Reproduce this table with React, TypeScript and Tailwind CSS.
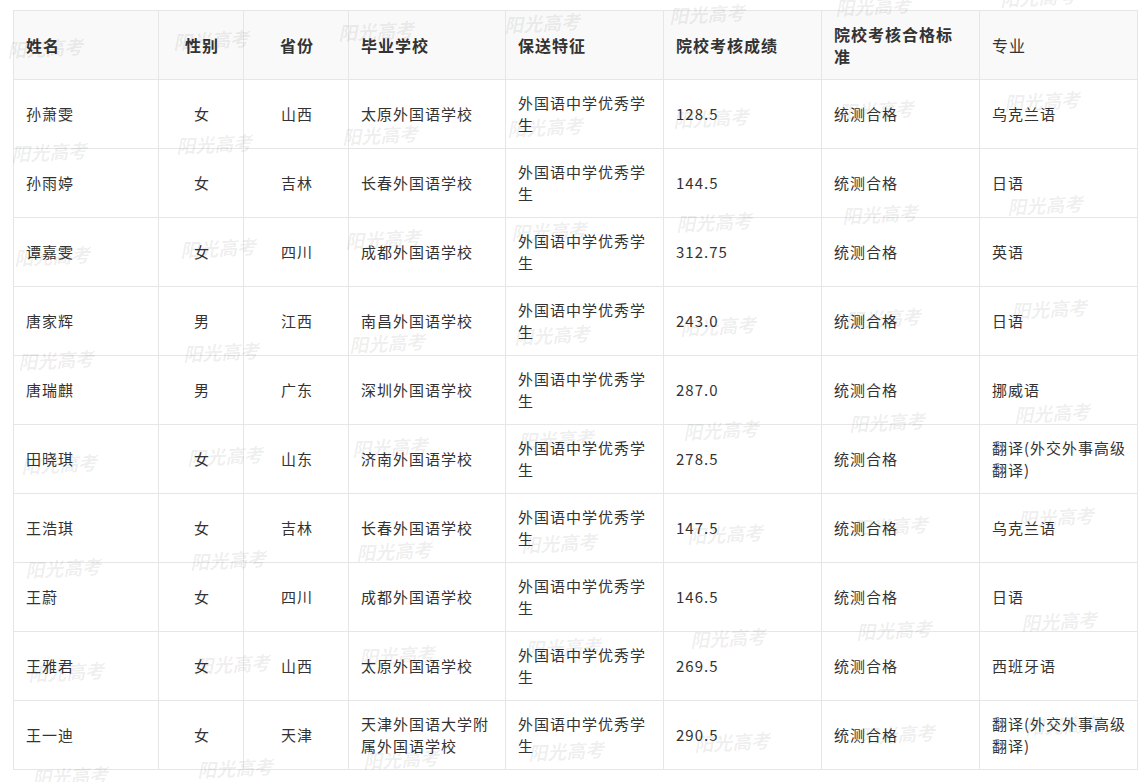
import React from "react";

const rows: string[][] = [
  ["孙萧雯", "女", "山西", "太原外国语学校", "外国语中学优秀学生", "128.5", "统测合格", "乌克兰语"],
  ["孙雨婷", "女", "吉林", "长春外国语学校", "外国语中学优秀学生", "144.5", "统测合格", "日语"],
  ["谭嘉雯", "女", "四川", "成都外国语学校", "外国语中学优秀学生", "312.75", "统测合格", "英语"],
  ["唐家辉", "男", "江西", "南昌外国语学校", "外国语中学优秀学生", "243.0", "统测合格", "日语"],
  ["唐瑞麒", "男", "广东", "深圳外国语学校", "外国语中学优秀学生", "287.0", "统测合格", "挪威语"],
  ["田晓琪", "女", "山东", "济南外国语学校", "外国语中学优秀学生", "278.5", "统测合格", "翻译(外交外事高级翻译)"],
  ["王浩琪", "女", "吉林", "长春外国语学校", "外国语中学优秀学生", "147.5", "统测合格", "乌克兰语"],
  ["王蔚", "女", "四川", "成都外国语学校", "外国语中学优秀学生", "146.5", "统测合格", "日语"],
  ["王雅君", "女", "山西", "太原外国语学校", "外国语中学优秀学生", "269.5", "统测合格", "西班牙语"],
  ["王一迪", "女", "天津", "天津外国语大学附属外国语学校", "外国语中学优秀学生", "290.5", "统测合格", "翻译(外交外事高级翻译)"],
];

const headers = ["姓名", "性别", "省份", "毕业学校", "保送特征", "院校考核成绩", "院校考核合格标准", "专业"];

const centered = [false, true, true, false, false, false, false, false];

export default function App() {
  const marks: { x: number; y: number }[] = [];
  for (let k = 0; k < 8; k++) {
    for (let j = 0; j < 7; j++) {
      marks.push({ x: 45 + 3.5 * k + 165.5 * j, y: 48 + 104 * k - 8.5 * j });
    }
  }
  return (
    <div
      className="relative w-full h-[782px] overflow-hidden bg-white text-[#333]"
      style={{ fontFamily: '"Noto Sans CJK SC", "Noto Sans", sans-serif' }}
    >
      <div className="pl-[13px] pt-[10px]">
        <div className="grid w-[1125px] grid-cols-[145px_85px_105px_157px_158px_158px_158px_158px] border-l border-t border-[#e6e6e6]">
          {headers.map((h, i) => (
            <div
              key={h}
              className={`flex h-[69px] items-center border-b border-r border-[#e6e6e6] bg-[#f9f9f9] pl-3 pr-2.5 text-[16px] leading-[22px] tracking-[1px] ${
                i === 7 ? "font-normal" : "font-bold"
              } ${centered[i] ? "justify-center pl-0 pr-0" : ""}`}
            >
              <span>{h}</span>
            </div>
          ))}
          {rows.map((r, ri) =>
            r.map((c, ci) => (
              <div
                key={`${ri}-${ci}`}
                className={`flex h-[69px] items-center border-b border-r border-[#e6e6e6] pl-3 pr-2.5 text-[15px] leading-[22px] tracking-[1px] ${
                  centered[ci] ? "justify-center pl-0 pr-0" : ""
                }`}
              >
                <span>{c}</span>
              </div>
            ))
          )}
        </div>
      </div>
      <div className="pointer-events-none absolute inset-0">
        {marks.map((m, i) => (
          <span
            key={i}
            className="absolute -translate-x-1/2 -translate-y-1/2 -rotate-3 whitespace-nowrap text-[19px] font-bold italic text-black/[0.07]"
            style={{ left: m.x, top: m.y, fontFamily: '"Noto Sans CJK SC", serif' }}
          >
            阳光高考
          </span>
        ))}
      </div>
    </div>
  );
}
